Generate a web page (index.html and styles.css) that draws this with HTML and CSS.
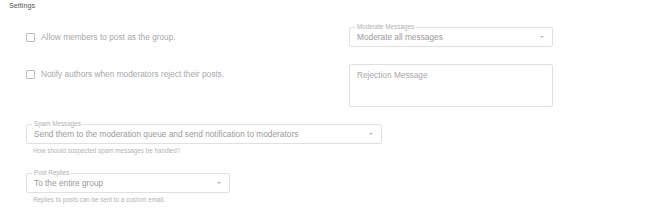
FILE: index.html
```html
<!DOCTYPE html>
<html lang="en">
<head>
    <meta charset="UTF-8">
    <title>Settings</title>
    <link rel="stylesheet" href="styles.css">
</head>
<body>
    <div class="title">Settings</div>

    <div class="settings">
        <div class="row">
            <label class="check">
                <span class="box"></span>
                Allow members to post as the group.
            </label>
            <div class="field select narrow">
                <span class="legend">Moderate Messages</span>
                <span class="value">Moderate all messages</span>
                <span class="arrow"></span>
            </div>
        </div>

        <div class="row top">
            <label class="check">
                <span class="box"></span>
                Notify authors when moderators reject their posts.
            </label>
            <div class="field area narrow">
                <span class="placeholder">Rejection Message</span>
            </div>
        </div>

        <div class="group">
            <div class="field select wide">
                <span class="legend">Spam Messages</span>
                <span class="value">Send them to the moderation queue and send notification to moderators</span>
                <span class="arrow"></span>
            </div>
            <div class="helper">How should suspected spam messages be handled?</div>
        </div>

        <div class="group">
            <div class="field select narrow">
                <span class="legend">Post Replies</span>
                <span class="value">To the entire group</span>
                <span class="arrow"></span>
            </div>
            <div class="helper">Replies to posts can be sent to a custom email.</div>
        </div>
    </div>
</body>
</html>
```

FILE: styles.css
```css
body {
    margin: 0;
    background: #fff;
    font-family: 'Liberation Sans', Arial, sans-serif;
    color: #aaa;
}
.title {
    padding-left: 9px;
    font-size: 7.2px;
    line-height: 11px;
    color: #555;
}
.settings {
    padding-left: 26px;
}
.row {
    display: flex;
    align-items: center;
    margin-top: 16px;
}
.row.top {
    align-items: flex-start;
    margin-top: 17px;
}
.check {
    width: 323px;
    height: 20px;
    display: flex;
    align-items: center;
    gap: 6px;
    font-size: 8.3px;
    color: #a8a8a8;
}
.box {
    width: 7px;
    height: 7px;
    border: 1px solid #bdbdbd;
    border-radius: 1px;
}
.field {
    position: relative;
    box-sizing: border-box;
    border: 1px solid #e0e0e0;
    border-radius: 2px;
    padding: 0 7px;
    font-size: 8.3px;
    color: #9a9a9a;
}
.narrow {
    width: 204px;
}
.wide {
    width: 356px;
}
.select {
    height: 20px;
    display: flex;
    align-items: center;
}
.area {
    height: 43px;
    padding-top: 5px;
}
.placeholder {
    color: #a8a8a8;
}
.legend {
    position: absolute;
    left: 5px;
    top: -5px;
    padding: 0 2px;
    background: #fff;
    font-size: 6.3px;
    line-height: 8px;
    color: #b0b0b0;
}
.arrow {
    position: absolute;
    right: 8px;
    top: 8px;
    border-left: 2.5px solid transparent;
    border-right: 2.5px solid transparent;
    border-top: 2.5px solid #b5b5b5;
}
.group {
    margin-top: 17px;
}
.group + .group {
    margin-top: 18px;
}
.helper {
    margin-top: 3px;
    padding-left: 7px;
    font-size: 6.3px;
    line-height: 8px;
    color: #b3b3b3;
}
```
